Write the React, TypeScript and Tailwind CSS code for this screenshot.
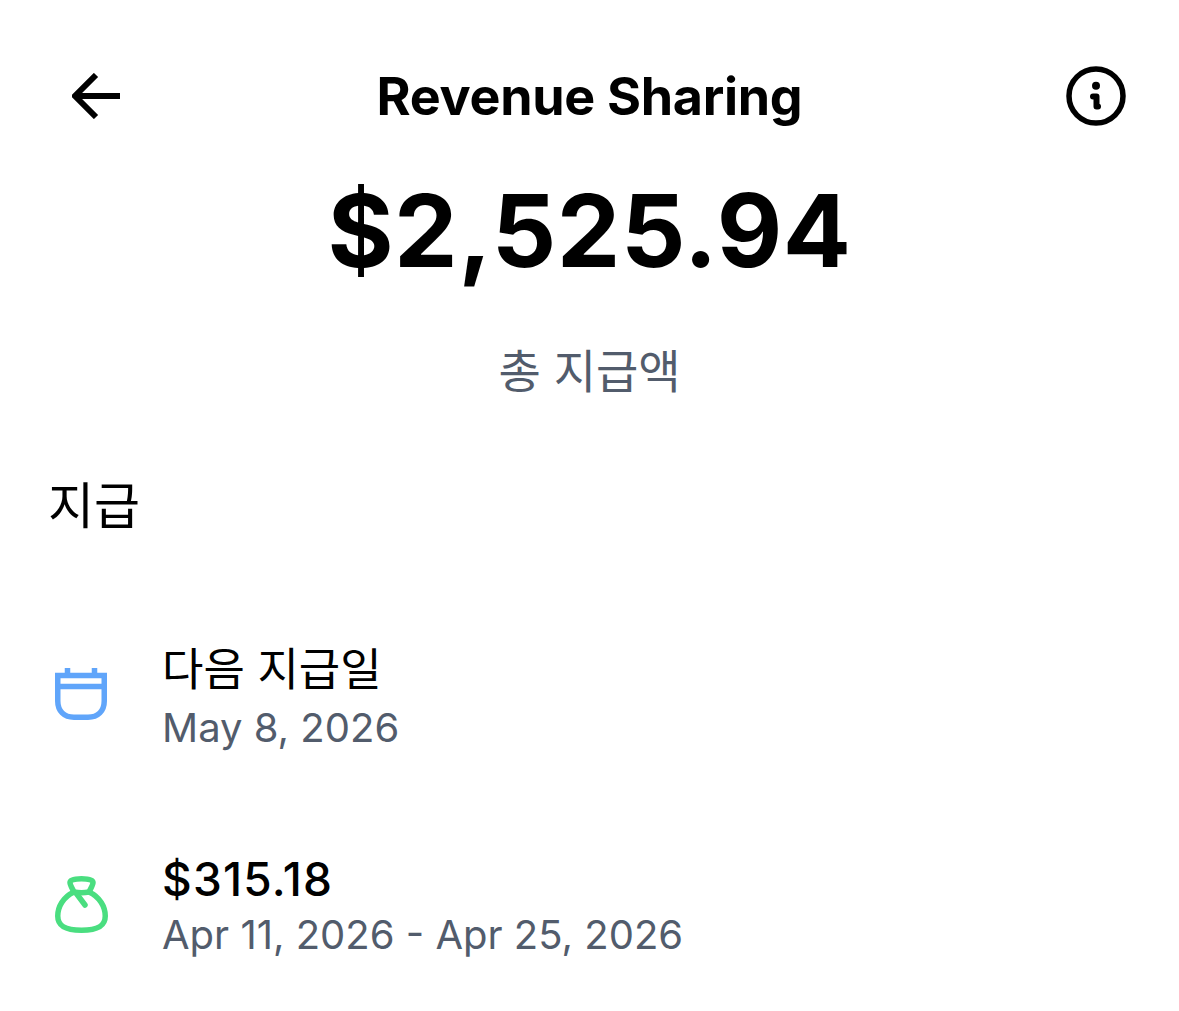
const font = { fontFamily: '"Inter", "Noto Sans CJK KR", sans-serif' };

function CalendarIcon() {
  return (
    <svg className="mb-[6px]" width="52" height="52" viewBox="0 0 52 52" fill="none" stroke="#60a5fa" strokeWidth="5.500">
      <path d="M2.750 7.500H49.250V33C49.250 43 43 49.250 33 49.250H19C9 49.250 2.750 43 2.750 33Z" />
      <path d="M2.750 18.500H49.250" />
      <path d="M12.500 0V6M39.500 0V6" />
    </svg>
  );
}

function BagIcon() {
  return (
    <svg className="mb-[3px]" width="53" height="57" viewBox="0 0 53 57" fill="none" stroke="#4ade80" strokeWidth="5.500" strokeLinecap="round" strokeLinejoin="round">
      <path d="M19 16C8 21 2.750 31 2.750 40C2.750 50 10 54.250 26.500 54.250C43 54.250 50.250 50 50.250 40C50.250 31 45 21 34 16" />
      <path d="M19 16C17 12 15 9 15 6.500C15 3.500 20 2.750 26.500 2.750C33 2.750 38 3.500 38 6.500C38 9 36 12 34 16C29 17 24 17 19 16Z" />
      <path d="M21 17C24 21 27 25 30 29" />
    </svg>
  );
}

export default function App() {
  return (
    <div className="w-[1179px] h-[1011px] bg-white overflow-hidden text-black" style={font}>
      <div className="grid grid-cols-[1fr_auto_1fr] items-center pt-[65px] px-[53px]">
        <svg className="ml-[19px]" width="50" height="46" viewBox="0 0 50 46" fill="none" stroke="#000" strokeWidth="6">
          <path d="M48 23H4" />
          <path d="M24 2L3 23L24 44" />
        </svg>
        <h1 className="mt-[2px] text-[52px] leading-[60px] font-bold tracking-[-0.3px]">Revenue Sharing</h1>
        <svg className="justify-self-end" width="60" height="60" viewBox="0 0 60 60" fill="none">
          <circle cx="30" cy="30" r="27" stroke="#000" strokeWidth="5.500" />
          <circle cx="30" cy="19.700" r="4" fill="#000" />
          <path d="M27 30.500H30.500V40.500H32" stroke="#000" strokeWidth="6" strokeLinecap="round" strokeLinejoin="round" />
        </svg>
      </div>

      <div className="mt-[43px] text-center text-[101px] leading-[120px] font-bold tracking-[0.5px]">$2,525.94</div>
      <div className="mt-[51px] text-center text-[46px] leading-[60px] text-[#525c6c]">총 지급액</div>

      <h2 className="mt-[75px] pl-[48px] text-[50px] leading-[60px]">지급</h2>

      <div className="mt-[105px] flex flex-col gap-[98px] pl-[55px]">
        <div className="flex items-center gap-[54px]">
          <div className="w-[53px] flex">
            <CalendarIcon />
          </div>
          <div>
            <div className="text-[45px] leading-[58px]">다음 지급일</div>
            <div className="mt-[4px] text-[40px] leading-[50px] text-[#525c6c]">May 8, 2026</div>
          </div>
        </div>
        <div className="flex items-center gap-[54px]">
          <div className="w-[53px] flex">
            <BagIcon />
          </div>
          <div>
            <div className="text-[46px] leading-[56px] font-medium tracking-[1.2px]">$315.18</div>
            <div className="mt-[3px] text-[40px] leading-[50px] text-[#525c6c]">Apr 11, 2026 - Apr 25, 2026</div>
          </div>
        </div>
      </div>
    </div>
  );
}
